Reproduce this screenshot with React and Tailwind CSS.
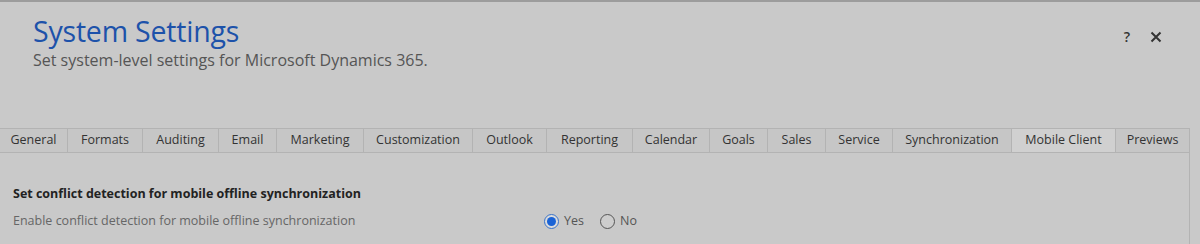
const tabs = [
  { label: "General", w: 68 },
  { label: "Formats", w: 75 },
  { label: "Auditing", w: 76 },
  { label: "Email", w: 58 },
  { label: "Marketing", w: 87 },
  { label: "Customization", w: 109 },
  { label: "Outlook", w: 74 },
  { label: "Reporting", w: 86 },
  { label: "Calendar", w: 77 },
  { label: "Goals", w: 58 },
  { label: "Sales", w: 58 },
  { label: "Service", w: 67 },
  { label: "Synchronization", w: 119 },
  { label: "Mobile Client", w: 104, active: true },
  { label: "Previews", w: 74 },
];

export default function App() {
  return (
    <div
      className="w-[1200px] h-[244px] overflow-hidden bg-[#c9c9c9] border-t-2 border-[#9c9c9c] flex flex-col"
      style={{ fontFamily: "'Open Sans', 'Noto Sans', sans-serif" }}
    >
      <div className="flex justify-between pl-[33px] pr-[38px] pt-[11px] h-[126px]">
        <div className="flex flex-col">
          <h1 className="text-[28.5px] leading-[37px] text-[#1d52aa] tracking-[-0.2px]">System Settings</h1>
          <p className="text-[16px] leading-[19px] text-[#555] mt-[1px]">
            Set system-level settings for Microsoft Dynamics 365.
          </p>
        </div>
        <div className="flex items-start gap-[20px] pt-[13px] text-[#333] font-semibold">
          <span className="text-[14px]">?</span>
          <svg width="12" height="12" viewBox="0 0 12 12" className="mt-[5px]">
            <path d="M1.5 1.5 L10.5 10.5 M10.5 1.5 L1.5 10.5" stroke="#333" strokeWidth="2" />
          </svg>
        </div>
      </div>

      <div className="flex h-[24px] pr-[10px]">
        {tabs.map((t) => (
          <div
            key={t.label}
            style={{ width: t.w }}
            className={
              "flex items-center justify-center shrink-0 border border-b-0 border-l-0 border-[#b3b3b3] text-[12.5px] text-[#333] " +
              (t.active ? "bg-[#d0d0d0]" : "bg-[#c6c6c6]")
            }
          >
            {t.label}
          </div>
        ))}
      </div>

      <div className="flex-1 mr-[10px] border-t border-r border-[#b3b3b3] pt-[33px] pl-[13px]">
        <div className="text-[12.5px] font-bold text-[#222] leading-[16px]">
          Set conflict detection for mobile offline synchronization
        </div>
        <div className="flex items-center mt-[10px] text-[12.5px] text-[#666]">
          <span className="w-[531px]">Enable conflict detection for mobile offline synchronization</span>
          <label className="flex items-center gap-[5px] text-[#555]">
            <span className="w-[15px] h-[15px] rounded-full border border-[#3a73c8] bg-[#dcdcdc] flex items-center justify-center">
              <span className="w-[9px] h-[9px] rounded-full bg-[#1a63d6]" />
            </span>
            <span className="text-[12.5px]">Yes</span>
          </label>
          <label className="flex items-center gap-[5px] ml-[16px] text-[#555]">
            <span className="w-[15px] h-[15px] rounded-full border border-[#555] bg-[#cdcdcd]" />
            <span className="text-[12.5px]">No</span>
          </label>
        </div>
      </div>
    </div>
  );
}
